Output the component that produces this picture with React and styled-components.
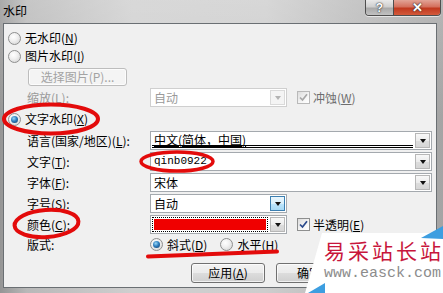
import React from 'react';
import styled, { createGlobalStyle, css } from 'styled-components';

const Global = createGlobalStyle`
  html, body { margin: 0; padding: 0; width: 443px; height: 293px; overflow: hidden; }
  body { font-family: "Noto Sans CJK SC", "Liberation Sans", sans-serif; font-size: 12px; color: #000; }
  * { box-sizing: border-box; }
`;

const Window = styled.div`
  position: relative;
  width: 443px;
  height: 293px;
  display: flex;
  flex-direction: column;
  padding: 0 6px 5px 3px;
  overflow: hidden;
  background:
    linear-gradient(180deg, rgba(255,255,255,0.2), rgba(255,255,255,0) 40%),
    linear-gradient(90deg, #959595 0%, #b8b8b8 6%, #cfcfcf 30%, #cdcdcd 60%, #b7b7b7 82%, #a4a4a4 100%);
`;

const TitleBar = styled.div`
  height: 23px;
  display: flex;
  justify-content: space-between;
  align-items: flex-start;
  flex: none;
`;

const Title = styled.div`
  padding-top: 3px;
  font-size: 12px;
  line-height: 15px;
  color: #000;
`;

const Caps = styled.div`
  display: flex;
  margin-right: -4px;
  height: 16px;
  border: 1px solid #4e4e4e;
  border-top: none;
  border-radius: 0 0 4px 4px;
  overflow: hidden;
  box-shadow: 0 1px 0 rgba(255,255,255,0.6);
`;

const CapBtn = styled.div`
  width: ${p => p.$w}px;
  height: 100%;
  display: flex;
  align-items: center;
  justify-content: center;
  font-family: "Liberation Sans", sans-serif;
  font-weight: bold;
  color: #fff;
  font-size: ${p => p.$fs}px;
  line-height: 1;
  text-shadow: 0 0 2px #333, 0 0 1px #222;
  background: ${p => p.$close
    ? 'linear-gradient(180deg, #e2a497 0%, #d4705d 45%, #c1391f 55%, #d35a3b 100%)'
    : 'linear-gradient(180deg, #e9e9e9 0%, #cfcfcf 45%, #a9a9a9 55%, #c2c2c2 100%)'};
  & + & { border-left: 1px solid #4e4e4e; }
`;

const Client = styled.div`
  flex: 1;
  display: flex;
  flex-direction: column;
  background: #f0f0f0;
  border: 1px solid #6a6f73;
  padding: 5px 0 0 4px;
`;

const OptionRow = styled.div`
  display: flex;
  align-items: center;
  gap: 4px;
  height: 18px;
  margin-top: ${p => p.$mt || 0}px;
  line-height: 1;
  white-space: nowrap;
`;

const Radio = styled.span`
  width: 13px;
  height: 13px;
  flex: none;
  border-radius: 50%;
  border: 1px solid #8e8f8f;
  background: radial-gradient(circle at 40% 35%, #ffffff 0%, #f1f1f1 40%, #cfcfcf 100%);
  display: flex;
  align-items: center;
  justify-content: center;
  ${p => p.$on && css`
    &::after {
      content: '';
      width: 7px;
      height: 7px;
      border-radius: 50%;
      background: radial-gradient(circle at 40% 35%, #9ad8f7 0%, #2f7fbf 45%, #0e3560 100%);
    }
  `}
`;

const ButtonIndent = styled.div`
  margin-top: 3px;
  padding-left: 20px;
  display: flex;
`;

const PushButton = styled.div`
  width: ${p => p.$w}px;
  height: ${p => p.$h || 19}px;
  border: 1px solid ${p => p.$disabled ? '#bdbdbd' : '#707070'};
  border-radius: 3px;
  background: ${p => p.$disabled
    ? '#f4f4f4'
    : 'linear-gradient(180deg, #f2f2f2 0%, #ebebeb 49%, #dddddd 50%, #cfcfcf 100%)'};
  color: ${p => p.$disabled ? '#a3a3a3' : '#000'};
  display: flex;
  align-items: center;
  justify-content: ${p => p.$left ? 'flex-start' : 'center'};
  padding-left: ${p => p.$left ? p.$left : 0}px;
  line-height: 1;
  white-space: nowrap;
  flex: none;
  box-shadow: inset 0 0 0 1px rgba(255,255,255,0.7);
`;

const FieldRow = styled.div`
  display: flex;
  align-items: center;
  height: 19px;
  padding-left: 19px;
  margin-top: ${p => p.$mt || 0}px;
  line-height: 1;
  white-space: nowrap;
`;

const Label = styled.span`
  width: 123px;
  flex: none;
  color: ${p => p.$disabled ? '#9a9a9a' : '#000'};
`;

const Combo = styled.div`
  width: ${p => p.$w}px;
  height: 19px;
  flex: none;
  display: flex;
  align-items: center;
  background: #fff;
  border: 1px solid ${p => p.$disabled ? '#cfcfcf' : '#a4a9ae'};
  padding: 1px;
`;

const ComboText = styled.div`
  flex: 1;
  height: 100%;
  display: flex;
  align-items: center;
  padding-left: 2px;
  margin-right: 2px;
  color: ${p => p.$disabled ? '#9a9a9a' : '#000'};
  font-family: ${p => p.$mono ? '"Liberation Mono", monospace' : 'inherit'};
  font-size: ${p => p.$mono ? '11px' : '12px'};
  ${p => p.$underline && css`
    border-bottom: 3px double #000;
    text-decoration: underline;
    text-underline-offset: 1px;
    padding-top: 1px;
  `}
`;

const Swatch = styled.div`
  flex: 1;
  height: 100%;
  margin-right: 2px;
  border: 1px dotted #000;
  padding: 1px;
  &::before {
    content: '';
    display: block;
    height: 100%;
    background: #f00000;
  }
`;

const DropBtn = styled.div`
  width: 15px;
  height: 15px;
  flex: none;
  display: flex;
  align-items: center;
  justify-content: center;
  border: 1px solid ${p => p.$hot ? '#3c7fb1' : p.$disabled ? '#dadada' : '#b7b7b7'};
  background: ${p => p.$hot
    ? 'linear-gradient(180deg, #eaf6fd 0%, #d9f0fc 50%, #bee6fd 51%, #a7d9f5 100%)'
    : p.$disabled ? '#f4f4f4' : 'linear-gradient(180deg, #f8f8f8 0%, #ececec 50%, #dedede 51%, #d6d6d6 100%)'};
  &::after {
    content: '';
    border-left: 3.5px solid transparent;
    border-right: 3.5px solid transparent;
    border-top: 4px solid ${p => p.$disabled ? '#b3b3b3' : '#111'};
    margin-top: 1px;
  }
`;

const CheckWrap = styled.span`
  display: flex;
  align-items: center;
  gap: 3px;
  margin-left: 10px;
  color: ${p => p.$disabled ? '#6e6e6e' : '#000'};
`;

const CheckBox = styled.span`
  width: 13px;
  height: 13px;
  flex: none;
  border: 1px solid ${p => p.$disabled ? '#b9b9b9' : '#8e8f8f'};
  background: linear-gradient(135deg, #dcdcdc 0%, #f6f6f6 60%, #ffffff 100%);
  display: flex;
  align-items: center;
  justify-content: center;
`;

const RadioGroup = styled.div`
  display: flex;
  align-items: center;
  gap: 13px;
`;

const RadioItem = styled.span`
  display: flex;
  align-items: center;
  gap: 4px;
`;

const ButtonBar = styled.div`
  display: flex;
  gap: 11px;
  margin-top: 9px;
  padding-left: 183px;
`;

const Overlay = styled.svg`
  position: absolute;
  left: 0;
  top: 0;
  pointer-events: none;
`;

const Logo = styled.div`
  position: absolute;
  right: 0;
  bottom: 0;
  width: 138px;
  height: 71px;
`;

const LogoBg = styled.svg`
  position: absolute;
  inset: 0;
`;

const LogoText = styled.div`
  position: relative;
  display: flex;
  flex-direction: column;
  padding: 16px 0 0 19px;
`;

const LogoName = styled.div`
  font-size: 21px;
  line-height: 24px;
  letter-spacing: 3px;
  color: #c8163c;
  font-weight: 400;
  white-space: nowrap;
`;

const LogoUrl = styled.div`
  margin-top: 4px;
  font-family: "Liberation Mono", monospace;
  font-size: 15px;
  line-height: 16px;
  color: #8c8c8c;
  white-space: nowrap;
`;

const Tick = ({ color }) => (
  <svg width="9" height="9" viewBox="0 0 9 9">
    <path d="M1 4.5 L3.5 7 L8 1.2" fill="none" stroke={color} strokeWidth="1.7" />
  </svg>
);

export default function App() {
  return (
    <>
      <Global />
      <Window>
        <TitleBar>
          <Title>水印</Title>
          <Caps>
            <CapBtn $w={27} $fs={12}>?</CapBtn>
            <CapBtn $w={47} $fs={13} $close>✕</CapBtn>
          </Caps>
        </TitleBar>
        <Client>
          <OptionRow>
            <Radio />
            <span>无水印(<u>N</u>)</span>
          </OptionRow>
          <OptionRow>
            <Radio />
            <span>图片水印(<u>I</u>)</span>
          </OptionRow>
          <ButtonIndent>
            <PushButton $w={99} $h={18} $disabled>选择图片(P)...</PushButton>
          </ButtonIndent>
          <FieldRow $mt={2}>
            <Label $disabled>缩放(<u>L</u>):</Label>
            <Combo $w={137} $disabled>
              <ComboText $disabled>自动</ComboText>
              <DropBtn $disabled />
            </Combo>
            <CheckWrap $disabled>
              <CheckBox $disabled><Tick color="#a8a8a8" /></CheckBox>
              <span>冲蚀(<u>W</u>)</span>
            </CheckWrap>
          </FieldRow>
          <OptionRow $mt={3}>
            <Radio $on />
            <span>文字水印(<u>X</u>)</span>
          </OptionRow>
          <FieldRow $mt={3}>
            <Label>语言(国家/地区)(<u>L</u>):</Label>
            <Combo $w={282}>
              <ComboText $underline>中文(简体，中国)</ComboText>
              <DropBtn />
            </Combo>
          </FieldRow>
          <FieldRow $mt={2}>
            <Label>文字(<u>T</u>):</Label>
            <Combo $w={282}>
              <ComboText $mono>qinb0922</ComboText>
              <DropBtn />
            </Combo>
          </FieldRow>
          <FieldRow $mt={2}>
            <Label>字体(<u>F</u>):</Label>
            <Combo $w={282}>
              <ComboText>宋体</ComboText>
              <DropBtn />
            </Combo>
          </FieldRow>
          <FieldRow $mt={2}>
            <Label>字号(<u>S</u>):</Label>
            <Combo $w={137}>
              <ComboText>自动</ComboText>
              <DropBtn $hot />
            </Combo>
          </FieldRow>
          <FieldRow $mt={2}>
            <Label>颜色(<u>C</u>):</Label>
            <Combo $w={137}>
              <Swatch />
              <DropBtn />
            </Combo>
            <CheckWrap>
              <CheckBox><Tick color="#2b4a8c" /></CheckBox>
              <span>半透明(<u>E</u>)</span>
            </CheckWrap>
          </FieldRow>
          <FieldRow $mt={1}>
            <Label>版式:</Label>
            <RadioGroup>
              <RadioItem>
                <Radio $on />
                <span>斜式(<u>D</u>)</span>
              </RadioItem>
              <RadioItem>
                <Radio />
                <span>水平(<u>H</u>)</span>
              </RadioItem>
            </RadioGroup>
          </FieldRow>
          <ButtonBar>
            <PushButton $w={74} $h={20}>应用(<u>A</u>)</PushButton>
            <PushButton $w={74} $h={20} $left={20}>确定</PushButton>
          </ButtonBar>
        </Client>

        <Overlay width="443" height="293" viewBox="0 0 443 293">
          <g fill="none" stroke="#e30b0b" strokeLinecap="round">
            <ellipse cx="51" cy="119" rx="47" ry="14.5" strokeWidth="4" />
            <ellipse cx="177" cy="161.5" rx="36" ry="9.5" strokeWidth="3.5" />
            <ellipse cx="46.5" cy="223.5" rx="32" ry="13.5" strokeWidth="4" transform="rotate(-4 46.5 223.5)" />
            <path d="M148 256.5 Q 210 254 277 251.5" strokeWidth="4" />
          </g>
        </Overlay>

        <Logo>
          <LogoBg width="138" height="71" viewBox="0 0 138 71">
            <polygon points="17,11 138,11 138,71 0,71" fill="#ffffff" />
            <polygon points="116,16 138,4 138,17" fill="#3d9ee0" />
            <polygon points="3,71 20,61 20,71" fill="#3d9ee0" />
          </LogoBg>
          <LogoText>
            <LogoName>易采站长站</LogoName>
            <LogoUrl>www.easck.com</LogoUrl>
          </LogoText>
        </Logo>
      </Window>
    </>
  );
}
